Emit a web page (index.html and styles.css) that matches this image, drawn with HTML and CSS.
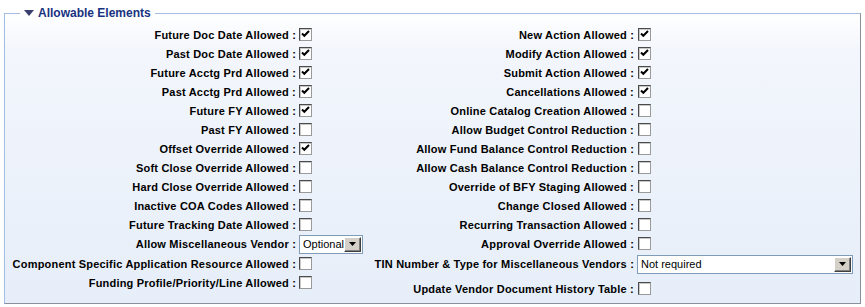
FILE: index.html
```html
<!DOCTYPE html>
<html lang="en">
<head>
    <meta charset="UTF-8">
    <title>Allowable Elements</title>
    <link rel="stylesheet" href="styles.css">
</head>
<body>
    <fieldset class="panel">
        <legend class="panel-title">
            <svg class="toggle" width="10" height="6" viewBox="0 0 10 6"><path d="M0 0 H10 L5 6 Z" /></svg>
            Allowable Elements
        </legend>
        <div class="columns">
            <div class="grid grid-left">
                <label class="lbl">Future Doc Date Allowed :</label><span class="cell"><input type="checkbox" class="chk" checked></span>
                <label class="lbl">Past Doc Date Allowed :</label><span class="cell"><input type="checkbox" class="chk" checked></span>
                <label class="lbl">Future Acctg Prd Allowed :</label><span class="cell"><input type="checkbox" class="chk" checked></span>
                <label class="lbl">Past Acctg Prd Allowed :</label><span class="cell"><input type="checkbox" class="chk" checked></span>
                <label class="lbl">Future FY Allowed :</label><span class="cell"><input type="checkbox" class="chk" checked></span>
                <label class="lbl">Past FY Allowed :</label><span class="cell"><input type="checkbox" class="chk"></span>
                <label class="lbl">Offset Override Allowed :</label><span class="cell"><input type="checkbox" class="chk" checked></span>
                <label class="lbl">Soft Close Override Allowed :</label><span class="cell"><input type="checkbox" class="chk"></span>
                <label class="lbl">Hard Close Override Allowed :</label><span class="cell"><input type="checkbox" class="chk"></span>
                <label class="lbl">Inactive COA Codes Allowed :</label><span class="cell"><input type="checkbox" class="chk"></span>
                <label class="lbl">Future Tracking Date Allowed :</label><span class="cell"><input type="checkbox" class="chk"></span>
                <label class="lbl">Allow Miscellaneous Vendor :</label>
                <span class="cell">
                    <span class="dropdown dropdown-small">
                        <span class="dropdown-value">Optional</span>
                        <span class="dropdown-btn"><svg width="7" height="4" viewBox="0 0 7 4"><path d="M0 0 H7 L3.5 4 Z" /></svg></span>
                    </span>
                </span>
                <label class="lbl">Component Specific Application Resource Allowed :</label><span class="cell"><input type="checkbox" class="chk"></span>
                <label class="lbl">Funding Profile/Priority/Line Allowed :</label><span class="cell"><input type="checkbox" class="chk"></span>
            </div>
            <div class="grid grid-right">
                <label class="lbl">New Action Allowed :</label><span class="cell"><input type="checkbox" class="chk" checked></span>
                <label class="lbl">Modify Action Allowed :</label><span class="cell"><input type="checkbox" class="chk" checked></span>
                <label class="lbl">Submit Action Allowed :</label><span class="cell"><input type="checkbox" class="chk" checked></span>
                <label class="lbl">Cancellations Allowed :</label><span class="cell"><input type="checkbox" class="chk" checked></span>
                <label class="lbl">Online Catalog Creation Allowed :</label><span class="cell"><input type="checkbox" class="chk"></span>
                <label class="lbl">Allow Budget Control Reduction :</label><span class="cell"><input type="checkbox" class="chk"></span>
                <label class="lbl">Allow Fund Balance Control Reduction :</label><span class="cell"><input type="checkbox" class="chk"></span>
                <label class="lbl">Allow Cash Balance Control Reduction :</label><span class="cell"><input type="checkbox" class="chk"></span>
                <label class="lbl">Override of BFY Staging Allowed :</label><span class="cell"><input type="checkbox" class="chk"></span>
                <label class="lbl">Change Closed Allowed :</label><span class="cell"><input type="checkbox" class="chk"></span>
                <label class="lbl">Recurring Transaction Allowed :</label><span class="cell"><input type="checkbox" class="chk"></span>
                <label class="lbl">Approval Override Allowed :</label><span class="cell"><input type="checkbox" class="chk"></span>
                <label class="lbl">TIN Number &amp; Type for Miscellaneous Vendors :</label>
                <span class="cell">
                    <span class="dropdown dropdown-wide">
                        <span class="dropdown-value">Not required</span>
                        <span class="dropdown-btn"><svg width="7" height="4" viewBox="0 0 7 4"><path d="M0 0 H7 L3.5 4 Z" /></svg></span>
                    </span>
                </span>
                <label class="lbl row-last">Update Vendor Document History Table :</label><span class="cell row-last"><input type="checkbox" class="chk"></span>
            </div>
        </div>
    </fieldset>
</body>
</html>
```

FILE: styles.css
```css
:root {
    --title-color: #18337f;
    --border-light: #a3bde3;
    --border-dark: #8a8f99;
    --panel-bottom: #e6eef9;
}

body {
    margin: 0;
    padding: 4px 4px 0 4px;
    background: #fff;
    font-family: "Liberation Sans", Arial, sans-serif;
    font-size: 11px;
    color: #000;
}

.panel {
    margin: 0;
    padding: 0 0 5px 0;
    width: 857px;
    box-sizing: border-box;
    border: 1px solid var(--border-light);
    border-right-color: var(--border-dark);
    border-bottom-color: var(--border-dark);
    background: linear-gradient(to bottom, #ffffff 0%, #f3f6fc 12%, var(--panel-bottom) 100%);
}

.panel-title {
    margin-left: 15px;
    padding: 0 4px;
    height: 18px;
    display: flex;
    align-items: center;
    gap: 4px;
    font-size: 12px;
    font-weight: bold;
    color: var(--title-color);
}

.toggle {
    fill: #3a3f6e;
}

.columns {
    display: flex;
    padding: 3px 0 0 3px;
}

.grid {
    display: grid;
    align-items: center;
    column-gap: 3px;
}

.grid-left {
    grid-template-columns: 288px 69px;
    grid-template-rows: repeat(11, 19px) 20px 19px 19px;
}

.grid-right {
    grid-template-columns: 266px auto;
    grid-template-rows: repeat(12, 19px) 22px 23px;
}

.lbl {
    font-weight: bold;
    text-align: right;
    white-space: nowrap;
    letter-spacing: 0.2px;
}

.cell {
    display: flex;
    align-items: center;
}

.row-last {
    margin-top: 4px;
}

.chk {
    appearance: none;
    -webkit-appearance: none;
    margin: 0;
    width: 13px;
    height: 13px;
    box-sizing: border-box;
    border: 1px solid #4a4a4a;
    border-right-color: #9a9a9a;
    border-bottom-color: #9a9a9a;
    background: #fff;
    box-shadow: inset 1px 1px 0 #c8c8c8;
}

.grid-right .chk {
    margin-left: 1px;
}

.chk:checked {
    background: #fff url("data:image/svg+xml,%3Csvg xmlns='http://www.w3.org/2000/svg' width='11' height='11' viewBox='0 0 11 11'%3E%3Cpath d='M2 4.5 L4.3 6.8 L9 2' fill='none' stroke='%23000' stroke-width='2'/%3E%3C/svg%3E") no-repeat 0 0;
}

.dropdown {
    display: flex;
    align-items: stretch;
    box-sizing: border-box;
    height: 19px;
    border: 1px solid #7f9db9;
    background: #fff;
    padding: 1px;
    font-size: 11px;
    font-weight: normal;
}

.dropdown-small {
    width: 64px;
}

.dropdown-wide {
    width: 216px;
}

.dropdown-value {
    flex: 1;
    padding-left: 2px;
    line-height: 15px;
    overflow: hidden;
    white-space: nowrap;
}

.dropdown-btn {
    width: 17px;
    box-sizing: border-box;
    display: flex;
    align-items: center;
    justify-content: center;
    background: #d4d0c8;
    border: 1px solid;
    border-color: #fff #404040 #404040 #fff;
    box-shadow: inset -1px -1px 0 #808080;
}
```
